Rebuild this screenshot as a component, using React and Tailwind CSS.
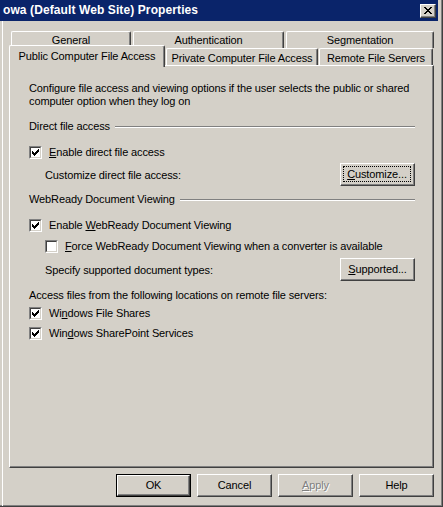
import React from 'react';

const face = "font-['Liberation_Sans',Arial,sans-serif]";

function CheckMark() {
  // classic 7x7 pixel check
  const cols = [2, 3, 4, 3, 2, 1, 0];
  return (
    <svg width="7" height="7" viewBox="0 0 7 7" shapeRendering="crispEdges">
      {cols.map((y, x) => (
        <rect key={x} x={x} y={y} width="1" height="3" fill="#000" />
      ))}
    </svg>
  );
}

function Check({ checked }) {
  return (
    <div className="w-[13px] h-[13px] shrink-0 border border-t-[#808080] border-l-[#808080] border-r-white border-b-white">
      <div className="w-full h-full border border-t-[#404040] border-l-[#404040] border-r-[#d4d0c8] border-b-[#d4d0c8] bg-white flex items-center justify-center">
        {checked && <CheckMark />}
      </div>
    </div>
  );
}

function CheckRow({ checked, children, className = '' }) {
  return (
    <div className={`flex items-center gap-[7px] h-[13px] ${className}`}>
      <Check checked={checked} />
      <span className="leading-[13px] whitespace-nowrap">{children}</span>
    </div>
  );
}

function Btn({ children, def, focus, disabled }) {
  const inner = (
    <div className="w-full h-full border border-t-white border-l-white border-r-[#404040] border-b-[#404040] shadow-[inset_-1px_-1px_0_#808080] flex items-center justify-center">
      {focus ? (
        <div className="self-stretch flex-1 m-[2px] mb-[3px] mr-[3px] border border-dotted border-black flex items-center justify-center">
          {children}
        </div>
      ) : (
        <span className={disabled ? 'text-[#808080] [text-shadow:1px_1px_0_#ffffff]' : ''}>{children}</span>
      )}
    </div>
  );
  return (
    <div className={`w-[75px] h-[23px] shrink-0 bg-[#d4d0c8] ${def ? 'border border-black' : ''}`}>
      {inner}
    </div>
  );
}

function U({ children }) {
  return <span className="underline underline-offset-[1px] decoration-1">{children}</span>;
}

function Tab({ w, children, selected, top }) {
  return (
    <div
      className={`shrink-0 text-center leading-[13px] whitespace-nowrap bg-[#d4d0c8] border-t border-l border-r border-t-white border-l-white border-r-[#404040] shadow-[inset_-1px_0_0_#808080] rounded-t-[2px] ${
        selected ? 'relative z-10 h-[22px] pt-[4px]' : top ? 'h-[17px] pt-[2px]' : 'mt-[3px] h-[17px] pt-[3px]'
      }`}
      style={{ width: w }}
    >
      {children}
    </div>
  );
}

function Section({ title }) {
  return (
    <div className="flex items-center h-[13px]">
      <span className="leading-[13px] whitespace-nowrap">{title}</span>
      <div className="flex-1 ml-[5px] h-[2px] border-t border-t-[#808080] border-b border-b-white" />
    </div>
  );
}

export default function App() {
  return (
    <div className={`w-[443px] h-[507px] bg-[#d4d0c8] text-black text-[11px] tracking-[-0.12px] ${face} border-r border-b border-[#404040] shadow-[inset_-1px_-1px_0_#808080] flex flex-col overflow-hidden`}>
      {/* title bar */}
      <div className="w-[438px] h-[21px] shrink-0 bg-[#0a246a] flex items-center justify-between pl-[3px] pr-[2px]">
        <span className="text-white font-bold text-[12px] tracking-[0.1px] leading-[13px] whitespace-nowrap">owa (Default Web Site) Properties</span>
        <div className="w-[16px] h-[14px] bg-[#d4d0c8] border border-t-white border-l-white border-r-[#404040] border-b-[#404040] shadow-[inset_-1px_-1px_0_#808080] flex items-center justify-center">
          <svg width="8" height="7" viewBox="0 0 8 7" shapeRendering="crispEdges">
            {[0, 1, 2, 3, 4, 5, 6].map((i) => (
              <g key={i}>
                <rect x={i} y={i} width="2" height="1" fill="#000" />
                <rect x={6 - i} y={i} width="2" height="1" fill="#000" />
              </g>
            ))}
          </svg>
        </div>
      </div>

      {/* body */}
      <div className="flex-1 ml-[2px] border-l border-white pl-[6px] flex flex-col">
        {/* tab strip row 1 */}
        <div className="mt-[10px] ml-[2px] flex gap-[2px] h-[17px]">
          <Tab w={120} top>General</Tab>
          <Tab w={151} top>Authentication</Tab>
          <Tab w={148} top>Segmentation</Tab>
        </div>
        {/* tab strip row 2 */}
        <div className="-mt-[3px] flex gap-[1px] h-[20px] items-start">
          <Tab w={156} selected>Public Computer File Access</Tab>
          <Tab w={152}>Private Computer File Access</Tab>
          <Tab w={114}>Remote File Servers</Tab>
        </div>

        {/* panel */}
        <div className="w-[425px] h-[403px] border-t border-l border-t-white border-l-white border-r border-b border-r-[#404040] border-b-[#404040] shadow-[inset_-1px_-1px_0_#808080] pl-[19px] pr-[18px] pt-[16px]">
          <p className="leading-[13px] whitespace-nowrap">
            Configure file access and viewing options if the user selects the public or shared
            <br />
            computer option when they log on
          </p>

          <div className="mt-[12px]">
            <Section title="Direct file access" />
          </div>
          <CheckRow checked className="mt-[13px]">
            <U>E</U>nable direct file access
          </CheckRow>
          <div className="mt-[4px] h-[23px] flex items-center justify-between pl-[16px]">
            <span className="leading-[13px] pt-[2px]">Customize direct file access:</span>
            <Btn focus>
              <span><U>C</U>ustomize...</span>
            </Btn>
          </div>

          <div className="mt-[7px]">
            <Section title="WebReady Document Viewing" />
          </div>
          <CheckRow checked className="mt-[13px]">
            Enable <U>W</U>ebReady Document Viewing
          </CheckRow>
          <CheckRow className="mt-[8px] ml-[16px]">
            <U>F</U>orce WebReady Document Viewing when a converter is available
          </CheckRow>
          <div className="mt-[5px] h-[23px] flex items-center justify-between pl-[16px]">
            <span className="leading-[13px] pt-[2px]">Specify supported document types:</span>
            <Btn>
              <span><U>S</U>upported...</span>
            </Btn>
          </div>

          <p className="mt-[8px] leading-[13px] whitespace-nowrap">Access files from the following locations on remote file servers:</p>
          <CheckRow checked className="mt-[5px]">
            Wi<U>n</U>dows File Shares
          </CheckRow>
          <CheckRow checked className="mt-[7px]">
            Win<U>d</U>ows SharePoint Services
          </CheckRow>
        </div>

        {/* dialog buttons */}
        <div className="w-[425px] mt-[6px] flex justify-end gap-[6px]">
          <Btn def>OK</Btn>
          <Btn>Cancel</Btn>
          <Btn disabled>
            <U>A</U>pply
          </Btn>
          <Btn>Help</Btn>
        </div>
      </div>
    </div>
  );
}
